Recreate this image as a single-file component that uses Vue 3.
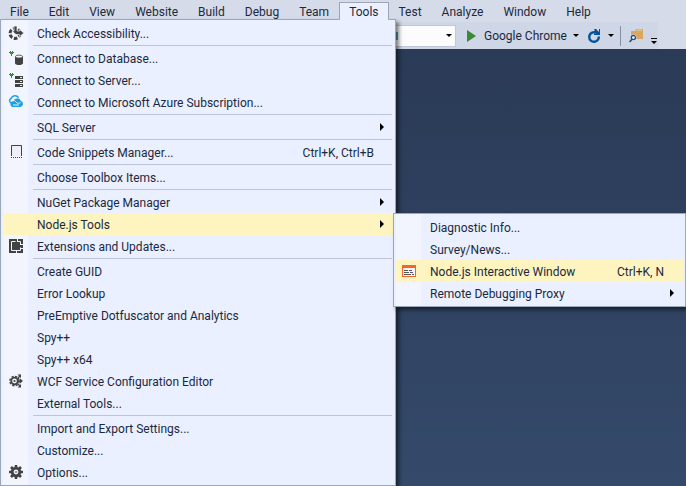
<script setup>
const bar = ['File', 'Edit', 'View', 'Website', 'Build', 'Debug', 'Team', 'Tools', 'Test', 'Analyze', 'Window', 'Help']

const groups = [
  [{ label: 'Check Accessibility...', icon: 'access' }],
  [
    { label: 'Connect to Database...', icon: 'database' },
    { label: 'Connect to Server...', icon: 'server' },
    { label: 'Connect to Microsoft Azure Subscription...', icon: 'cloud' },
  ],
  [{ label: 'SQL Server', arrow: true }],
  [{ label: 'Code Snippets Manager...', icon: 'snippet', keys: 'Ctrl+K, Ctrl+B' }],
  [{ label: 'Choose Toolbox Items...' }],
  [
    { label: 'NuGet Package Manager', arrow: true },
    { label: 'Node.js Tools', arrow: true, active: true },
    { label: 'Extensions and Updates...', icon: 'extension' },
  ],
  [
    { label: 'Create GUID' },
    { label: 'Error Lookup' },
    { label: 'PreEmptive Dotfuscator and Analytics' },
    { label: 'Spy++' },
    { label: 'Spy++ x64' },
    { label: 'WCF Service Configuration Editor', icon: 'wcf' },
    { label: 'External Tools...' },
  ],
  [
    { label: 'Import and Export Settings...' },
    { label: 'Customize...' },
    { label: 'Options...', icon: 'gear' },
  ],
]

const subItems = [
  { label: 'Diagnostic Info...' },
  { label: 'Survey/News...' },
  { label: 'Node.js Interactive Window', icon: 'interactive', keys: 'Ctrl+K, N', active: true },
  { label: 'Remote Debugging Proxy', arrow: true },
]

const menus = [
  { name: 'Tools', cls: 'main', groups },
  { name: 'Node.js Tools', cls: 'sub', groups: [subItems] },
]
</script>

<template>
  <div class="app">
    <nav class="menubar" aria-label="Main menu">
      <button v-for="b in bar" :key="b" type="button" class="top" :class="{ open: b === 'Tools' }">{{ b }}</button>
    </nav>

    <div class="toolbar" role="toolbar" aria-label="Standard">
      <button type="button" class="combo" aria-label="Solution platform">
        <span class="chip"></span>
        <svg class="caret" viewBox="0 0 6 3"><path d="M0 0h6L3 3z" /></svg>
      </button>
      <button type="button" class="tool run">
        <svg width="9" height="12" viewBox="0 0 9 12"><path d="M0 0l9 6-9 6z" fill="#388a34" /></svg>
        <span>Google Chrome</span>
        <svg class="caret" viewBox="0 0 6 3"><path d="M0 0h6L3 3z" /></svg>
      </button>
      <button type="button" class="tool refresh" aria-label="Refresh">
        <svg width="13" height="14" viewBox="0 0 13 14">
          <path d="M10.800 7.500A4.800 4.800 0 1 1 6 3.200H8" fill="none" stroke="#00539c" stroke-width="2.400" />
          <path d="M6 0h2l3 3V0h1v6H6V4.500h2z" fill="#00539c" />
        </svg>
        <svg class="caret" viewBox="0 0 6 3"><path d="M0 0h6L3 3z" /></svg>
      </button>
      <span class="divider"></span>
      <button type="button" class="tool find" aria-label="Find in files">
        <svg width="15" height="14" viewBox="0 0 15 14">
          <path d="M2 2h4l1-2h7v10H2z" fill="#dba65d" />
          <path d="M7.500 1.200H13" stroke="#f3d9b0" stroke-width=".8" />
          <circle cx="4.200" cy="8.600" r="3.400" fill="#d3dae8" />
          <circle cx="4.400" cy="8.600" r="2.100" fill="#eef2fa" stroke="#1c4c85" stroke-width="1.300" />
          <path d="M2.900 10.300L.6 13" stroke="#1c4c85" stroke-width="1.700" />
        </svg>
      </button>
      <button type="button" class="overflow" aria-label="Toolbar options">
        <svg width="6" height="6" viewBox="0 0 6 6"><path d="M0 0h6v1H0zM0 3h6L3 6z" /></svg>
      </button>
    </div>

    <div v-for="m in menus" :key="m.name" class="menu" :class="m.cls" role="menu" :aria-label="m.name">
      <div v-for="(g, gi) in m.groups" :key="gi" class="group" role="group">
        <button v-for="it in g" :key="it.label" type="button" role="menuitem" class="item" :class="{ active: it.active }">
          <span class="icon">
            <svg v-if="it.icon === 'access'" width="16" height="16" viewBox="0 0 16 16">
              <circle cx="7" cy="8.400" r="5" fill="none" stroke="#424242" stroke-width="3" stroke-dasharray="3.600 1.636" />
              <path d="M6 1h3v5h2.500V4.500L16 8l-4.500 3.500V9.500H8L4 6h2z" fill="#424242" stroke="#f0f3ff" stroke-width=".7" />
            </svg>
            <svg v-else-if="it.icon === 'database'" width="16" height="16" viewBox="0 0 16 16">
              <path d="M2 1h1v1h1V1h1v1h1v1H5v1H4v2H3V4H2V3H1V2h1z" fill="#388a34" />
              <path d="M7 6.500v6.700c0 2.400 8 2.400 8 0V6.500z" fill="#424242" />
              <ellipse cx="11" cy="6.600" rx="3.600" ry="1.500" fill="#f0f0f4" stroke="#424242" stroke-width=".8" />
            </svg>
            <svg v-else-if="it.icon === 'server'" width="16" height="16" viewBox="0 0 16 16">
              <path d="M2 1h1v1h1V1h1v1h1v1H5v1H4v2H3V4H2V3H1V2h1z" fill="#388a34" />
              <path d="M7 4h8v3H7zM7 8h8v3H7zM7 12h8v3H7z" fill="#424242" />
              <path d="M12 5h2v1h-2zM12 9h2v1h-2zM12 13h2v1h-2z" fill="#e8ebf4" />
            </svg>
            <svg v-else-if="it.icon === 'cloud'" width="16" height="16" viewBox="0 0 16 16">
              <path d="M3.500 9.200A2.600 2.600 0 0 1 3 4.400a4.300 4.300 0 0 1 7.600-.8" fill="none" stroke="#1ba1e2" stroke-width="1.500" />
              <path d="M5.500 13a2.900 2.900 0 0 1-.2-5.800 4 4 0 0 1 7.500-.4A3.200 3.200 0 0 1 12.300 13z" fill="#1ba1e2" />
              <path d="M5 6.300c2-.4 2.500 2 4.500 2.800 1.600.6 2.800-.1 3-1.200M5 11h6" fill="none" stroke="#eaf2ff" stroke-width="1" />
            </svg>
            <svg v-else-if="it.icon === 'snippet'" width="16" height="16" viewBox="0 0 16 16">
              <path d="M3.500 12V1.500h10V12" fill="#f0eff8" stroke="#424242" />
              <path d="M3 13.500h11" stroke="#424242" stroke-dasharray="1 1" />
            </svg>
            <svg v-else-if="it.icon === 'extension'" width="16" height="16" viewBox="0 0 16 16">
              <path d="M1 1h14v14H1z" fill="#424242" />
              <path d="M7.500 3.500h-4v9h9v-3M9.500 3.500h3v3" fill="none" stroke="#f0f3ff" />
              <path d="M9.500 1v3M12 6.500h3M12 10.500h3M8.500 12v3" stroke="#f0f3ff" />
              <path d="M5 5h6v6H5z" fill="#424242" />
            </svg>
            <svg v-else-if="it.icon === 'wcf'" width="16" height="16" viewBox="0 0 16 16">
              <circle cx="6.500" cy="8" r="4.700" fill="none" stroke="#424242" stroke-width="1.400" stroke-dasharray="2.200 1.490" />
              <circle cx="6.500" cy="8" r="3.300" fill="none" stroke="#424242" stroke-width="1.800" />
              <circle cx="6.500" cy="8" r="1.100" fill="#424242" />
              <path d="M9 8h4M9.500 5.500L12 3M9.500 10.500L12 13" stroke="#424242" stroke-width="1.300" />
              <path d="M12 5.500L15 8l-3 2.500zM9.500 1.500H13V5zM9.500 14.500H13V11z" fill="#424242" />
            </svg>
            <svg v-else-if="it.icon === 'gear'" width="16" height="16" viewBox="0 0 16 16">
              <path d="M8 1v14M1 8h14M3 3l10 10M13 3L3 13" stroke="#424242" stroke-width="2.600" />
              <circle cx="8" cy="8" r="5.200" fill="#424242" />
              <circle cx="8" cy="8" r="2.400" fill="#f0f3ff" />
              <circle cx="8" cy="8" r="1" fill="#777" />
            </svg>
            <svg v-else-if="it.icon === 'interactive'" width="16" height="16" viewBox="0 0 16 16">
              <path d="M1 2h14v12H1z" fill="#f2662b" />
              <path d="M2 5h12v8H2z" fill="#f5f3f5" />
              <path d="M3 7.500h4M8 7.500h3M3 9.500h5M9 9.500h3M3 11.500h7M11 11.500h2" stroke="#55555a" />
            </svg>
          </span>
          <span class="label">{{ it.label }}</span>
          <span v-if="it.keys" class="keys">{{ it.keys }}</span>
          <svg v-if="it.arrow" class="arrow" width="4" height="8" viewBox="0 0 4 8"><path d="M0 0l4 4-4 4z" /></svg>
        </button>
      </div>
    </div>
  </div>
</template>

<style>
body {
  margin: 0;
}
</style>

<style scoped>
.app {
  position: relative;
  min-height: 100vh;
  overflow: hidden;
  background: linear-gradient(#293955, #35496a);
  font-family: Roboto, "Open Sans", sans-serif;
  font-size: 12px;
  line-height: 16px;
  color: #1b293e;
}
button {
  margin: 0;
  padding: 0;
  border: 0;
  background: none;
  font: inherit;
  color: inherit;
  white-space: nowrap;
}
svg {
  display: block;
  flex: none;
}
.menubar {
  display: flex;
  height: 22px;
  padding-top: 2px;
  box-sizing: border-box;
  background: #d6dbe9;
}
.top {
  height: 18px;
  padding: 0 9px;
  border: 1px solid transparent;
  border-bottom: 0;
}
.top.open {
  position: relative;
  z-index: 1;
  background: #eaf0ff;
  border-color: #9ba7b7;
}
.toolbar {
  display: flex;
  align-items: center;
  height: 27px;
  background: linear-gradient(90deg, #cfd6e5 658px, #d6dbe9 658px);
}
.combo {
  display: flex;
  align-items: center;
  justify-content: space-between;
  box-sizing: border-box;
  width: 116px;
  height: 22px;
  margin-left: 340px;
  padding: 0 3px 0 55px;
  border: 1px solid #bfc7d8;
  background: #fcfcfc;
}
.chip {
  width: 2px;
  height: 8px;
  background: #4aa3c8;
}
.caret {
  width: 6px;
  height: 3px;
}
.tool {
  display: flex;
  align-items: center;
}
.run {
  gap: 6px;
  margin-left: 11px;
}
.run span {
  margin-left: 2px;
}
.refresh {
  gap: 7px;
  margin-left: 9px;
}
.divider {
  width: 1px;
  height: 20px;
  margin: 0 8px 0 6px;
  background: #8591a2;
}
.overflow {
  align-self: flex-end;
  margin-left: 7px;
  padding-bottom: 5px;
}
.menu {
  position: absolute;
  box-sizing: border-box;
  padding: 2px;
  border: 1px solid #9ba7b7;
  background: linear-gradient(90deg, #eaf0ff 2px, #f2f4fe 2px, #f2f4fe 27px, #eaf0ff 27px);
  box-shadow: 3px 3px 4px rgba(0, 0, 0, 0.5);
}
.main {
  top: 19px;
  left: 0;
  width: 396px;
}
.sub {
  top: 213px;
  left: 393px;
  width: 293px;
}
.group + .group::before {
  content: "";
  display: block;
  height: 1px;
  margin: 1px 1px 1px 30px;
  background: #bdc5d5;
}
.item {
  display: flex;
  align-items: center;
  width: 100%;
  height: 22px;
  padding-right: 9px;
  text-align: left;
}
.item.active {
  background: #fdf4bf;
}
.icon {
  width: 16px;
  height: 16px;
  margin: 0 13px 0 5px;
}
.label,
.keys {
  padding-top: 2px;
}
.label {
  flex: 1;
}
.keys {
  margin-right: 10px;
}
</style>
